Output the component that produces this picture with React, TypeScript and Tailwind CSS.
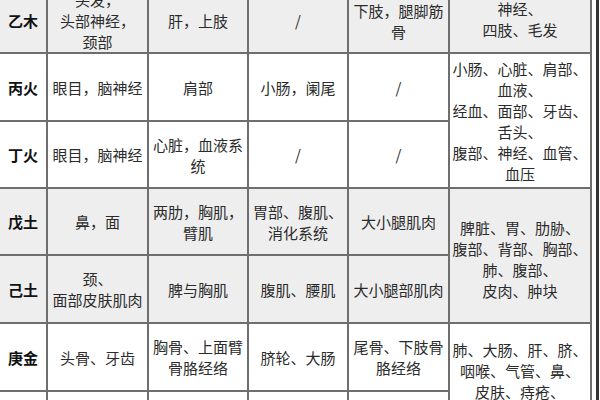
import React from "react"

type Cell = {
  lines: string[]
  bold?: boolean
  gray?: boolean
  span?: boolean
  cls?: string
}

const rows: Cell[][] = [
  [
    { lines: ["乙木"], bold: true, gray: true },
    { lines: ["头发，", "头部神经，", "颈部"], gray: true },
    { lines: ["肝，上肢"], gray: true },
    { lines: ["/"], gray: true },
    { lines: ["下肢，腿脚筋", "骨"], gray: true },
    { lines: ["肝胆、", "神经、", "四肢、毛发"], gray: true, cls: "items-end pb-[12px]" },
  ],
  [
    { lines: ["丙火"], bold: true },
    { lines: ["眼目，脑神经"] },
    { lines: ["肩部"] },
    { lines: ["小肠，阑尾"] },
    { lines: ["/"] },
    {
      lines: ["小肠、心脏、肩部、", "血液、", "经血、面部、牙齿、", "舌头、", "腹部、神经、血管、", "血压"],
      span: true,
    },
  ],
  [
    { lines: ["丁火"], bold: true },
    { lines: ["眼目，脑神经"] },
    { lines: ["心脏，血液系", "统"] },
    { lines: ["/"] },
    { lines: ["/"] },
  ],
  [
    { lines: ["戊土"], bold: true, gray: true },
    { lines: ["鼻，面"], gray: true },
    { lines: ["两肋，胸肌，", "臂肌"], gray: true },
    { lines: ["胃部、腹肌、", "消化系统"], gray: true },
    { lines: ["大小腿肌肉"], gray: true },
    {
      lines: ["脾脏、胃、肋胁、", "腹部、背部、胸部、", "肺、腹部、", "皮肉、肿块"],
      gray: true,
      span: true,
      cls: "pt-[6px]",
    },
  ],
  [
    { lines: ["己土"], bold: true, gray: true },
    { lines: ["颈、", "面部皮肤肌肉"], gray: true },
    { lines: ["脾与胸肌"], gray: true },
    { lines: ["腹肌、腰肌"], gray: true },
    { lines: ["大小腿部肌肉"], gray: true },
  ],
  [
    { lines: ["庚金"], bold: true },
    { lines: ["头骨、牙齿"] },
    { lines: ["胸骨、上面臂", "骨胳经络"] },
    { lines: ["脐轮、大肠"] },
    { lines: ["尾骨、下肢骨", "胳经络"] },
    {
      lines: ["肺、大肠、肝、脐、", "咽喉、气管、鼻、", "皮肤、痔疮、", "骨骼"],
      span: true,
      cls: "items-start pt-[15px]",
    },
  ],
  [
    { lines: ["辛金"], bold: true },
    { lines: ["胸，肺"] },
    { lines: ["肺，呼吸系统"] },
    { lines: ["/"] },
    { lines: ["/"] },
  ],
]

export default function App() {
  return (
    <div
      className="flex h-[400px] w-[600px] overflow-hidden bg-white"
      style={{ fontFamily: '"Noto Sans CJK SC", "Noto Sans", sans-serif' }}
    >
      <div className="mt-[-11px] grid h-fit grid-cols-[46px_99px_98px_98px_99px_140px] grid-rows-[63px_66px_65px_65px_66px_66px_66px] gap-[2px] bg-[#6e6e6e] pr-[2px]">
        {rows.map((row, ri) =>
          row.map((c, ci) => (
            <div
              key={ri + "-" + ci}
              className={
                "flex items-center justify-center whitespace-nowrap text-center text-[15px] leading-[21px] " +
                (c.gray ? "bg-[#eeeeee] " : "bg-white ") +
                (c.bold ? "font-bold text-[#111111] " : "text-[#2b2b2b] ") +
                (c.span ? "row-span-2 " : "") +
                (c.cls ?? "")
              }
            >
              <div>
                {c.lines.map((l, i) => (
                  <div key={i}>{l}</div>
                ))}
              </div>
            </div>
          ))
        )}
      </div>
      <div className="w-[4px] bg-white" />
      <div className="h-full w-[3px] bg-[#333333]" />
    </div>
  )
}
